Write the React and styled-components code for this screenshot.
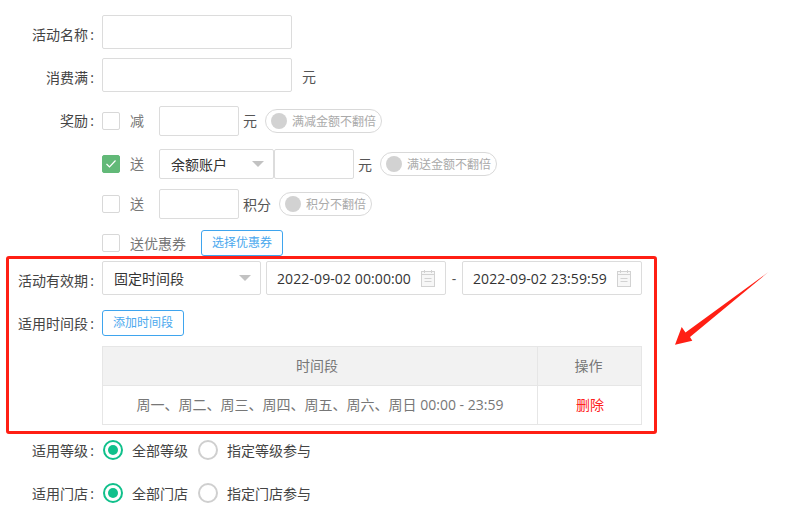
import React from "react";
import styled, { createGlobalStyle } from "styled-components";

const GlobalStyle = createGlobalStyle`
  html, body { margin: 0; padding: 0; background: #fff; }
  body {
    font-family: "Open Sans", "Noto Sans CJK SC", sans-serif;
    font-size: 14px;
    color: #333;
  }
`;

const Page = styled.div`
  position: relative;
  width: 809px;
  height: 511px;
  overflow: hidden;
  padding-top: 15px;
  box-sizing: border-box;
`;

const Row = styled.div`
  display: flex;
  align-items: center;
  height: ${(p) => p.$h || 30}px;
  margin-top: ${(p) => p.$mt || 0}px;
  margin-bottom: ${(p) => p.$mb || 0}px;
  padding-left: ${(p) => (p.$indent ? 102 : 0)}px;
`;

const Label = styled.div`
  width: 94px;
  margin-right: 8px;
  flex: none;
  text-align: right;
  white-space: nowrap;
  color: #444;
  padding-top: ${(p) => p.$down || 0}px;
  padding-bottom: ${(p) => p.$up || 0}px;
`;

const Colon = styled.span`
  display: inline-block;
  width: 6px;
  text-align: right;
`;

const Input = styled.div`
  flex: none;
  box-sizing: border-box;
  width: ${(p) => p.$w}px;
  height: ${(p) => p.$h || 30}px;
  border: 1px solid #dcdcdc;
  border-radius: 2px;
  background: #fff;
`;

const Unit = styled.span`
  flex: none;
  color: #555;
  margin-left: ${(p) => p.$ml || 0}px;
  padding-top: ${(p) => p.$down || 0}px;
  padding-bottom: ${(p) => p.$up || 0}px;
`;

const Check = styled.span`
  flex: none;
  box-sizing: border-box;
  width: 18px;
  height: 18px;
  border-radius: 2px;
  border: 1px solid ${(p) => (p.$on ? "#62b978" : "#d8d8d8")};
  background: ${(p) => (p.$on ? "#62b978" : "#fff")};
  display: flex;
  align-items: center;
  justify-content: center;
`;

const CheckText = styled.span`
  flex: none;
  color: #777;
  margin-left: 10px;
  width: ${(p) => p.$w}px;
  padding-bottom: ${(p) => p.$up || 0}px;
`;

const Toggle = styled.div`
  flex: none;
  box-sizing: border-box;
  display: flex;
  align-items: center;
  height: 24px;
  margin-left: 8px;
  padding: 0 5px;
  border: 1px solid #d9d9d9;
  border-radius: 12px;
  font-size: 12px;
  color: #aaa;
`;

const Knob = styled.span`
  width: 16px;
  height: 16px;
  margin-right: 5px;
  border-radius: 50%;
  background: #d2d2d2;
`;

const Select = styled.div`
  flex: none;
  box-sizing: border-box;
  display: flex;
  align-items: center;
  justify-content: space-between;
  width: ${(p) => p.$w}px;
  height: ${(p) => p.$h}px;
  padding: 0 ${(p) => p.$pr}px 0 ${(p) => p.$pl}px;
  border: 1px solid #dcdcdc;
  border-radius: 2px;
  color: #333;
`;

const Caret = styled.span`
  width: 0;
  height: 0;
  border-left: 6px solid transparent;
  border-right: 6px solid transparent;
  border-top: 6px solid #c2c2c2;
`;

const OutlineButton = styled.div`
  flex: none;
  box-sizing: border-box;
  width: ${(p) => p.$w}px;
  height: 26px;
  border: 1px solid #3fa5ee;
  border-radius: 3px;
  font-size: 12px;
  line-height: 23px;
  text-align: center;
  color: #4aa8ee;
`;

const Highlight = styled.section`
  box-sizing: border-box;
  width: 651px;
  height: 178px;
  margin-left: 6px;
  padding-top: 2px;
  border: 3px solid #ff1f14;
  border-radius: 3px;
`;

const HighlightRow = styled.div`
  display: flex;
  align-items: center;
  height: ${(p) => p.$h}px;
  margin-bottom: ${(p) => p.$mb || 0}px;
`;

const InnerLabel = styled(Label)`
  width: 85px;
`;

const DateBox = styled.div`
  flex: none;
  box-sizing: border-box;
  display: flex;
  align-items: center;
  justify-content: space-between;
  width: 180px;
  height: 34px;
  padding: 0 10px;
  border: 1px solid #dcdcdc;
  border-radius: 2px;
  color: #333;
  margin-left: ${(p) => p.$ml || 0}px;
  letter-spacing: 0.1px;
`;

const Dash = styled.span`
  width: 16px;
  text-align: center;
  color: #555;
`;

const Table = styled.table`
  width: 540px;
  margin-left: 93px;
  border-collapse: collapse;
  table-layout: fixed;
  color: #777;
`;

const Th = styled.th`
  box-sizing: border-box;
  height: 39px;
  padding: 0 ${(p) => p.$pr || 0}px 2px 0;
  border: 1px solid #e6e6e6;
  background: #f2f2f2;
  font-weight: 400;
  width: ${(p) => p.$w || "auto"};
`;

const Td = styled.td`
  box-sizing: border-box;
  height: 39px;
  padding: 0 0 3px ${(p) => p.$pl || 0}px;
  border: 1px solid #e6e6e6;
  text-align: center;
  color: ${(p) => p.$color || "#777"};
`;

const Radio = styled.span`
  flex: none;
  box-sizing: border-box;
  width: 20px;
  height: 20px;
  margin-left: ${(p) => p.$ml || 0}px;
  border-radius: 50%;
  border: 2px solid ${(p) => (p.$on ? "#10c08b" : "#cfcfcf")};
  display: flex;
  align-items: center;
  justify-content: center;
  &::after {
    content: "";
    display: ${(p) => (p.$on ? "block" : "none")};
    width: 10px;
    height: 10px;
    border-radius: 50%;
    background: #10c08b;
  }
`;

const RadioText = styled.span`
  flex: none;
  color: #444;
  margin: 0 10px 0 9px;
`;

const Arrow = styled.svg`
  position: absolute;
  left: 670px;
  top: 268px;
`;

const CalendarIcon = () => (
  <svg width="14" height="17" viewBox="0 0 14 17" fill="none" stroke="#d2d2d2" strokeWidth="1">
    <rect x="0.5" y="1.5" width="13" height="15" fill="#f7f7f7" />
    <path d="M0.5 4.5h13M3.5 0v3M10.5 0v3M3.5 8.5h7M3.5 11.5h7" />
  </svg>
);

const App = () => {
  return (
    <Page>
      <GlobalStyle />
      <Row $h={34} $mb={9}>
        <Label $down={4}>活动名称<Colon>:</Colon></Label>
        <Input $w={190} $h={34} />
      </Row>
      <Row $h={34} $mb={14}>
        <Label $down={4}>消费满<Colon>:</Colon></Label>
        <Input $w={190} $h={34} />
        <Unit $ml={10} $down={2}>元</Unit>
      </Row>
      <Row $mb={13}>
        <Label $up={2}>奖励<Colon>:</Colon></Label>
        <Check />
        <CheckText $w={29} $up={2}>减</CheckText>
        <Input $w={80} />
        <Unit $ml={4} $up={2}>元</Unit>
        <Toggle>
          <Knob />
          满减金额不翻倍
        </Toggle>
      </Row>
      <Row $indent $mb={10}>
        <Check $on>
          <svg width="12" height="10" viewBox="0 0 12 10" fill="none" stroke="#fff" strokeWidth="1.2">
            <path d="M1.5 5l3 3 6-6.5" />
          </svg>
        </Check>
        <CheckText $w={29} $up={2}>送</CheckText>
        <Select $w={115} $h={30} $pl={11} $pr={9}>
          余额账户
          <Caret />
        </Select>
        <Input $w={80} />
        <Unit $ml={4}>元</Unit>
        <Toggle>
          <Knob />
          满送金额不翻倍
        </Toggle>
      </Row>
      <Row $indent $mb={11}>
        <Check />
        <CheckText $w={29} $up={2}>送</CheckText>
        <Input $w={80} />
        <Unit $ml={4}>积分</Unit>
        <Toggle>
          <Knob />
          积分不翻倍
        </Toggle>
      </Row>
      <Row $indent $h={26}>
        <Check />
        <CheckText $w={71}>送优惠券</CheckText>
        <OutlineButton $w={82}>选择优惠券</OutlineButton>
      </Row>
      <Highlight>
        <HighlightRow $h={34} $mb={15}>
          <InnerLabel $down={4}>活动有效期<Colon>:</Colon></InnerLabel>
          <Select $w={159} $h={34} $pl={11} $pr={9}>
            固定时间段
            <Caret />
          </Select>
          <DateBox $ml={5}>
            2022-09-02 00:00:00
            <CalendarIcon />
          </DateBox>
          <Dash>-</Dash>
          <DateBox>
            2022-09-02 23:59:59
            <CalendarIcon />
          </DateBox>
        </HighlightRow>
        <HighlightRow $h={26} $mb={10}>
          <InnerLabel>适用时间段<Colon>:</Colon></InnerLabel>
          <OutlineButton $w={82}>添加时间段</OutlineButton>
        </HighlightRow>
        <Table>
          <thead>
            <tr>
              <Th $pr={6}>时间段</Th>
              <Th $w="104px" $pr={2}>操作</Th>
            </tr>
          </thead>
          <tbody>
            <tr>
              <Td>周一、周二、周三、周四、周五、周六、周日 00:00 - 23:59</Td>
              <Td $color="#ff2020" $pl={1}>删除</Td>
            </tr>
          </tbody>
        </Table>
      </Highlight>
      <Row $mb={13} $mt={1}>
        <Label>适用等级<Colon>:</Colon></Label>
        <Radio $on $ml={1} />
        <RadioText>全部等级</RadioText>
        <Radio />
        <RadioText>指定等级参与</RadioText>
      </Row>
      <Row>
        <Label>适用门店<Colon>:</Colon></Label>
        <Radio $on $ml={1} />
        <RadioText>全部门店</RadioText>
        <Radio />
        <RadioText>指定门店参与</RadioText>
      </Row>
      <Arrow width="104" height="82" viewBox="670 268 104 82">
        <path d="M768.4 272 L690 337 L692.3 340.7 L675 344.8 L681.7 327 L685.5 332.5 Z" fill="#ff1f14" />
      </Arrow>
    </Page>
  );
};

export default App;
